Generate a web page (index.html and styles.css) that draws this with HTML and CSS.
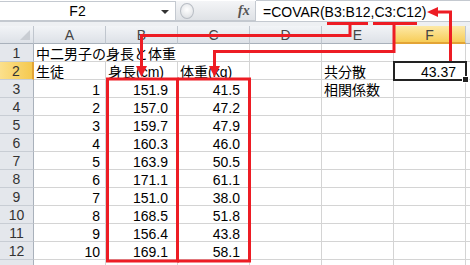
FILE: index.html
```html
<!DOCTYPE html>
<html lang="ja">
<head>
    <meta charset="UTF-8">
    <title>共分散</title>
    <link rel="stylesheet" href="styles.css">
</head>
<body>
    <div class="fbar">
        <div class="namebox">
            <span class="name">F2</span>
            <span class="dd"></span>
        </div>
        <div class="grip"><span class="knob"></span></div>
        <div class="fx">fx</div>
        <div class="formula">=COVAR(B3:B12,C3:C12)</div>
    </div>
    <div class="gap"></div>

    <div class="sheet">
        <!-- column headers -->
        <div class="hd corner"></div>
        <div class="hd">A</div>
        <div class="hd">B</div>
        <div class="hd">C</div>
        <div class="hd">D</div>
        <div class="hd">E</div>
        <div class="hd on">F</div>
        <div class="hd"></div>

        <div class="rh">1</div>
        <div class="c txt span3">中二男子の身長と体重</div>
        <div class="c"></div><div class="c"></div><div class="c"></div><div class="c"></div>

        <div class="rh on">2</div>
        <div class="c txt">生徒</div>
        <div class="c txt">身長(cm)</div>
        <div class="c txt">体重(kg)</div>
        <div class="c"></div>
        <div class="c txt">共分散</div>
        <div class="c num sel">43.37</div>
        <div class="c"></div>
    </div>
    <div class="sheet" id="rows"></div>

    <svg class="marks" width="470" height="265" viewBox="0 0 470 265">
        <g fill="none" stroke="#ed1c24" stroke-width="3">
            <path d="M327 23.5H368"/>
            <path d="M373 23.5H417"/>
            <path d="M350 23V35.5H141.5V68"/>
            <path d="M394 23V51.5H214.5V68"/>
            <path d="M450.5 61V12H436"/>
            <rect x="107.5" y="79" width="70" height="182"/>
            <path d="M177.5 79H249.5V261H177.5"/>
        </g>
        <g fill="#ed1c24">
            <polygon points="136,66 147,66 141.5,77"/>
            <polygon points="209,66 220,66 214.5,77"/>
            <polygon points="438,7 438,17 427,12"/>
        </g>
    </svg>

    <script>
        var data = [
            [1, '151.9', '41.5', '相関係数'],
            [2, '157.0', '47.2'],
            [3, '159.7', '47.9'],
            [4, '160.3', '46.0'],
            [5, '163.9', '50.5'],
            [6, '171.1', '61.1'],
            [7, '151.0', '38.0'],
            [8, '168.5', '51.8'],
            [9, '156.4', '43.8'],
            [10, '169.1', '58.1']
        ];
        var rows = document.getElementById('rows');
        var html = '';
        data.forEach(function (d, i) {
            html += '<div class="rh">' + (i + 3) + '</div>';
            html += '<div class="c int">' + d[0] + '</div>';
            html += '<div class="c num">' + d[1] + '</div>';
            html += '<div class="c num">' + d[2] + '</div>';
            html += '<div class="c"></div>';
            html += '<div class="c txt">' + (d[3] || '') + '</div>';
            html += '<div class="c"></div><div class="c"></div>';
        });
        // row 13 is only a sliver at the bottom edge
        html += '<div class="rh"></div>';
        for (var k = 0; k < 7; k++) html += '<div class="c"></div>';
        rows.innerHTML = html;
    </script>
</body>
</html>
```

FILE: styles.css
```css
body {
    margin: 0;
    width: 470px;
    height: 265px;
    overflow: hidden;
    position: relative;
    background-color: #fff;
    font-family: "Liberation Sans", "Noto Sans CJK JP", sans-serif;
    font-size: 14px;
    color: #000;
}
.fbar {
    display: flex;
    height: 22px;
    box-sizing: border-box;
    border-bottom: 1px solid #c4c9d0;
    background-color: #fff;
}
.namebox {
    width: 176px;
    display: flex;
    align-items: center;
    box-sizing: border-box;
    border: 1px solid #c4c9d0;
    border-left: none;
    margin-top: 1px;
}
.name {
    flex: 1;
    text-align: center;
    padding-right: 6px;
}
.dd {
    width: 0;
    height: 0;
    border-left: 4px solid transparent;
    border-right: 4px solid transparent;
    border-top: 4px solid #333;
    margin: 1px 6px 0 0;
}
.grip {
    width: 56px;
    display: flex;
    align-items: center;
    background: linear-gradient(#f4f5f7, #dfe2e6);
    border-bottom: 1px solid #c4c9d0;
    margin-top: 1px;
    box-sizing: border-box;
}
.knob {
    width: 12px;
    height: 14px;
    margin-left: 4px;
    border: 1px solid #b8bdc4;
    border-radius: 50%;
    background: radial-gradient(circle at 50% 40%, #fff, #d7dade);
}
.fx {
    width: 24px;
    padding-left: 6px;
    display: flex;
    align-items: center;
    font-family: "Liberation Serif", serif;
    font-style: italic;
    font-weight: bold;
    font-size: 14px;
    color: #555;
    background: linear-gradient(#f4f5f7, #dfe2e6);
    border-bottom: 1px solid #c4c9d0;
    border-right: 1px solid #c4c9d0;
    margin-top: 1px;
    box-sizing: border-box;
}
.formula {
    flex: 1;
    padding: 2px 0 0 7px;
    line-height: 18px;
    border-top: 1px solid #c4c9d0;
}
.gap {
    height: 4px;
    background-color: #eef0f3;
}
.sheet {
    display: grid;
    grid-template-columns: 34px repeat(7, 72px);
    grid-auto-rows: 18px;
}
.hd, .rh, .c {
    box-sizing: border-box;
    border-right: 1px solid #d4d4d4;
    border-bottom: 1px solid #d4d4d4;
    white-space: nowrap;
    line-height: 17px;
    padding-top: 1px;
}
.hd {
    text-align: center;
    color: #444;
    background: linear-gradient(#f2f4f7, #dde1e7);
    border-right-color: #c0c6ce;
    border-bottom-color: #a9b1bb;
}
.hd.on {
    background: linear-gradient(#fde9a8, #f7cd58);
    border-bottom: 2px solid #e3a436;
}
.corner {
    position: relative;
}
.corner::after {
    content: "";
    position: absolute;
    right: 3px;
    bottom: 3px;
    border-left: 10px solid transparent;
    border-bottom: 10px solid #c9cdd3;
}
.rh {
    text-align: center;
    color: #333;
    background-color: #e4e7ec;
    border-right-color: #a9b1bb;
    border-bottom-color: #c8cdd4;
}
.rh.on {
    background: linear-gradient(90deg, #fbe08c, #f5c94f);
    border-right: 2px solid #e3a436;
}
.c {
    padding-top: 2px;
}
.txt {
    padding-left: 2px;
}
.span3 {
    grid-column: span 3;
}
.int {
    text-align: right;
    padding-right: 5px;
}
.num {
    text-align: right;
    padding-right: 9px;
}
.sel {
    position: relative;
    outline: 2px solid #222;
    outline-offset: -1px;
}
.sel::after {
    content: "";
    position: absolute;
    right: -4px;
    bottom: -4px;
    width: 5px;
    height: 5px;
    background-color: #222;
    border: 1px solid #fff;
}
.marks {
    position: absolute;
    top: 0;
    left: 0;
}
```
